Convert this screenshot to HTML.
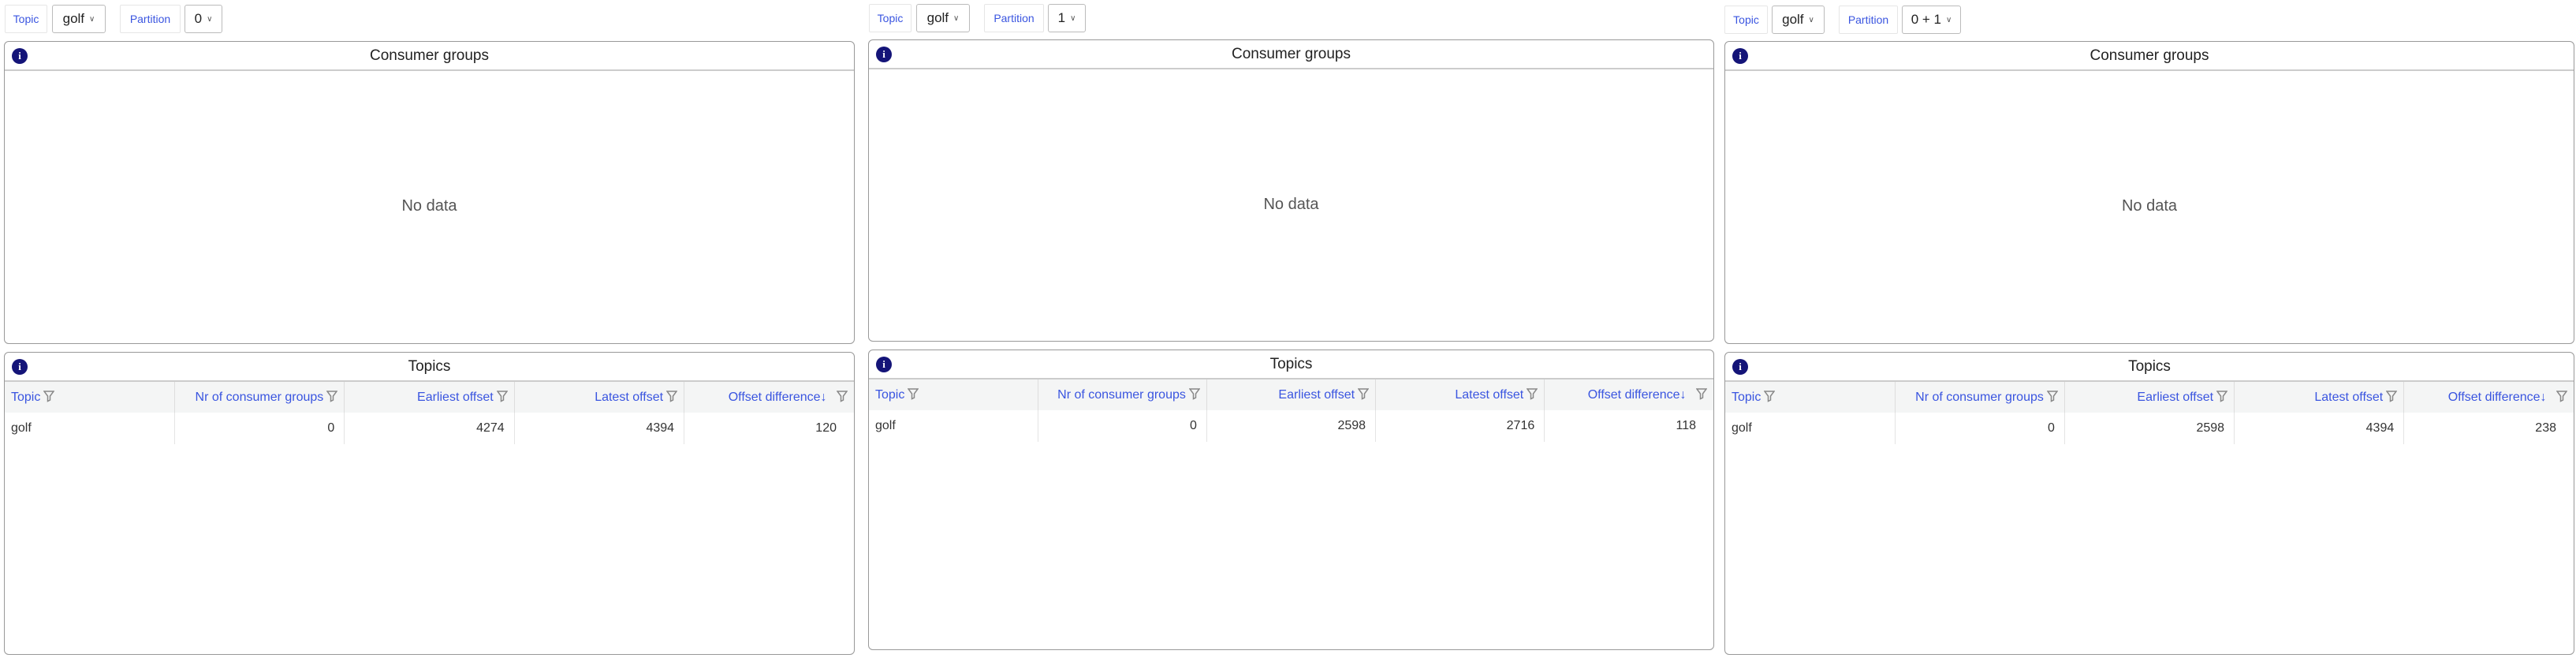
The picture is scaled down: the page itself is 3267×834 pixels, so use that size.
<!DOCTYPE html>
<html><head><meta charset="utf-8"><style>
*{box-sizing:border-box;margin:0;padding:0}
body{width:3267px;height:834px;background:#fff;font-family:"Liberation Sans",sans-serif;position:relative;overflow:hidden;color:#333}
.a{position:absolute}
.lbl{position:absolute;height:36px;border:1px solid #e6e6e6;border-radius:2px;color:#3a55e0;font-size:14px;display:flex;align-items:center;justify-content:center}
.sel{position:absolute;height:36px;border:1px solid #bbb;border-radius:3px;font-size:17px;color:#222;display:flex;align-items:center;justify-content:center;gap:6px}
.sel span.c{font-size:10px;color:#555}
.panel{position:absolute;border:1.5px solid #999;border-radius:6px;background:#fff;overflow:hidden}
.hd{height:37px;border-bottom:2px solid #ccc;position:relative;text-align:center;font-size:19px;line-height:36px;color:#222}
.info{position:absolute;left:9px;top:8px;width:20px;height:20px;border-radius:50%;background:#141478;color:#fff;font-size:13px;font-weight:bold;line-height:20px;text-align:center;font-family:"Liberation Serif",serif}
.nd{position:absolute;left:0;right:0;text-align:center;font-size:20px;color:#555}
table{border-collapse:collapse;width:100%;table-layout:fixed;font-size:16px}
th{background:#f4f5f5;height:39px;font-weight:normal;color:#3a55e0;text-align:right;padding:0 8px;border-left:1px solid #ddd;white-space:nowrap}
th:first-child,td:first-child{text-align:left;border-left:none}
td{height:40px;text-align:right;padding:0 12px 0 8px;border-left:1px solid #e4e4e4;color:#333}
.f{display:inline-block;vertical-align:-2px;margin-left:4px}
</style></head><body>

<!-- Panel 1 -->
<div class="lbl" style="left:6px;top:6px;width:54px">Topic</div>
<div class="sel" style="left:66px;top:6px;width:68px">golf <span class="c">&#x2228;</span></div>
<div class="lbl" style="left:152px;top:6px;width:77px">Partition</div>
<div class="sel" style="left:234px;top:6px;width:48px">0 <span class="c">&#x2228;</span></div>
<div class="panel" style="left:5px;top:52px;width:1079px;height:384px"><div class="hd"><div class="info">i</div>Consumer groups</div><div class="nd" style="top:197px">No data</div></div>
<div class="panel" style="left:5px;top:446px;width:1079px;height:384px"><div class="hd"><div class="info">i</div>Topics</div>
<table><tr><th>Topic<svg class="f" width="14" height="16" viewBox="0 0 14 16"><path d="M1 2h12l-4.5 6v5l-3 1.5V8z" fill="none" stroke="#888" stroke-width="1.5"/></svg></th><th>Nr of consumer groups<svg class="f" width="14" height="16" viewBox="0 0 14 16"><path d="M1 2h12l-4.5 6v5l-3 1.5V8z" fill="none" stroke="#888" stroke-width="1.5"/></svg></th><th>Earliest offset<svg class="f" width="14" height="16" viewBox="0 0 14 16"><path d="M1 2h12l-4.5 6v5l-3 1.5V8z" fill="none" stroke="#888" stroke-width="1.5"/></svg></th><th>Latest offset<svg class="f" width="14" height="16" viewBox="0 0 14 16"><path d="M1 2h12l-4.5 6v5l-3 1.5V8z" fill="none" stroke="#888" stroke-width="1.5"/></svg></th><th>Offset difference&#8595; <svg class="f" style="margin-left:8px" width="14" height="16" viewBox="0 0 14 16"><path d="M1 2h12l-4.5 6v5l-3 1.5V8z" fill="none" stroke="#888" stroke-width="1.5"/></svg></th></tr>
<tr><td>golf</td><td>0</td><td>4274</td><td>4394</td><td style="padding-right:22px">120</td></tr></table></div>

<!-- Panel 2 -->
<div class="lbl" style="left:1102px;top:5px;width:54px">Topic</div>
<div class="sel" style="left:1162px;top:5px;width:68px">golf <span class="c">&#x2228;</span></div>
<div class="lbl" style="left:1248px;top:5px;width:76px">Partition</div>
<div class="sel" style="left:1329px;top:5px;width:48px">1 <span class="c">&#x2228;</span></div>
<div class="panel" style="left:1101px;top:50px;width:1073px;height:383px"><div class="hd"><div class="info">i</div>Consumer groups</div><div class="nd" style="top:197px">No data</div></div>
<div class="panel" style="left:1101px;top:443px;width:1073px;height:381px"><div class="hd"><div class="info">i</div>Topics</div>
<table><tr><th>Topic<svg class="f" width="14" height="16" viewBox="0 0 14 16"><path d="M1 2h12l-4.5 6v5l-3 1.5V8z" fill="none" stroke="#888" stroke-width="1.5"/></svg></th><th>Nr of consumer groups<svg class="f" width="14" height="16" viewBox="0 0 14 16"><path d="M1 2h12l-4.5 6v5l-3 1.5V8z" fill="none" stroke="#888" stroke-width="1.5"/></svg></th><th>Earliest offset<svg class="f" width="14" height="16" viewBox="0 0 14 16"><path d="M1 2h12l-4.5 6v5l-3 1.5V8z" fill="none" stroke="#888" stroke-width="1.5"/></svg></th><th>Latest offset<svg class="f" width="14" height="16" viewBox="0 0 14 16"><path d="M1 2h12l-4.5 6v5l-3 1.5V8z" fill="none" stroke="#888" stroke-width="1.5"/></svg></th><th>Offset difference&#8595; <svg class="f" style="margin-left:8px" width="14" height="16" viewBox="0 0 14 16"><path d="M1 2h12l-4.5 6v5l-3 1.5V8z" fill="none" stroke="#888" stroke-width="1.5"/></svg></th></tr>
<tr><td>golf</td><td>0</td><td>2598</td><td>2716</td><td style="padding-right:22px">118</td></tr></table></div>

<!-- Panel 3 -->
<div class="lbl" style="left:2187px;top:7px;width:55px">Topic</div>
<div class="sel" style="left:2247px;top:7px;width:67px">golf <span class="c">&#x2228;</span></div>
<div class="lbl" style="left:2332px;top:7px;width:75px">Partition</div>
<div class="sel" style="left:2412px;top:7px;width:75px">0 + 1 <span class="c">&#x2228;</span></div>
<div class="panel" style="left:2187px;top:52px;width:1078px;height:384px"><div class="hd"><div class="info">i</div>Consumer groups</div><div class="nd" style="top:197px">No data</div></div>
<div class="panel" style="left:2187px;top:446px;width:1078px;height:384px"><div class="hd"><div class="info">i</div>Topics</div>
<table><tr><th>Topic<svg class="f" width="14" height="16" viewBox="0 0 14 16"><path d="M1 2h12l-4.5 6v5l-3 1.5V8z" fill="none" stroke="#888" stroke-width="1.5"/></svg></th><th>Nr of consumer groups<svg class="f" width="14" height="16" viewBox="0 0 14 16"><path d="M1 2h12l-4.5 6v5l-3 1.5V8z" fill="none" stroke="#888" stroke-width="1.5"/></svg></th><th>Earliest offset<svg class="f" width="14" height="16" viewBox="0 0 14 16"><path d="M1 2h12l-4.5 6v5l-3 1.5V8z" fill="none" stroke="#888" stroke-width="1.5"/></svg></th><th>Latest offset<svg class="f" width="14" height="16" viewBox="0 0 14 16"><path d="M1 2h12l-4.5 6v5l-3 1.5V8z" fill="none" stroke="#888" stroke-width="1.5"/></svg></th><th>Offset difference&#8595; <svg class="f" style="margin-left:8px" width="14" height="16" viewBox="0 0 14 16"><path d="M1 2h12l-4.5 6v5l-3 1.5V8z" fill="none" stroke="#888" stroke-width="1.5"/></svg></th></tr>
<tr><td>golf</td><td>0</td><td>2598</td><td>4394</td><td style="padding-right:22px">238</td></tr></table></div>

</body></html>
